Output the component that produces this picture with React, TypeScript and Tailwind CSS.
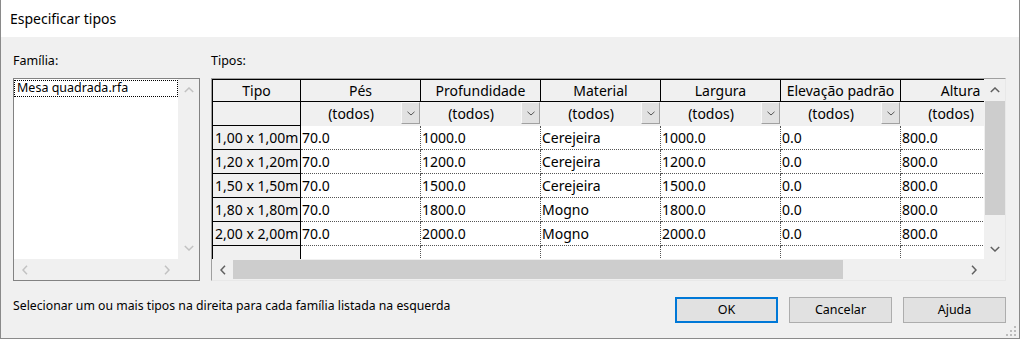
import React from "react";

const cols = ["Pés", "Profundidade", "Material", "Largura", "Elevação padrão", "Altura"];
const rows = [
  ["1,00 x 1,00m", "70.0", "1000.0", "Cerejeira", "1000.0", "0.0", "800.0"],
  ["1,20 x 1,20m", "70.0", "1200.0", "Cerejeira", "1200.0", "0.0", "800.0"],
  ["1,50 x 1,50m", "70.0", "1500.0", "Cerejeira", "1500.0", "0.0", "800.0"],
  ["1,80 x 1,80m", "70.0", "1800.0", "Mogno", "1800.0", "0.0", "800.0"],
  ["2,00 x 2,00m", "70.0", "2000.0", "Mogno", "2000.0", "0.0", "800.0"],
];

function Chevron({ dir, color }: { dir: "up" | "down" | "left" | "right"; color: string }) {
  if (dir === "up" || dir === "down") {
    const d = dir === "up" ? "M0.8 5 L5 1 L9.2 5" : "M0.8 1 L5 5 L9.2 1";
    return (
      <svg width="10" height="6" viewBox="0 0 10 6">
        <path d={d} fill="none" stroke={color} strokeWidth="1.5" />
      </svg>
    );
  }
  const d = dir === "left" ? "M5 0.8 L1 5 L5 9.2" : "M1 0.8 L5 5 L1 9.2";
  return (
    <svg width="6" height="10" viewBox="0 0 6 10">
      <path d={d} fill="none" stroke={color} strokeWidth="1.5" />
    </svg>
  );
}

function DropBtn() {
  return (
    <div className="w-[19px] h-[22px] mr-[1px] shrink-0 bg-[#e1e1e1] border border-t-[#f8f8f8] border-l-[#f8f8f8] border-r-[#a0a0a0] border-b-[#a0a0a0] flex items-center justify-center">
      <svg width="8" height="5" viewBox="0 0 8 5">
        <path d="M0.5 0.8 L4 4 L7.5 0.8" fill="none" stroke="#555" strokeWidth="1" />
      </svg>
    </div>
  );
}

export default function App() {
  return (
    <div className="relative w-[1020px] h-[339px] bg-[#f0f0f0] border-x border-b border-[#8a8a8a] flex flex-col font-['Noto_Sans',sans-serif] text-black overflow-hidden">
      {/* title bar */}
      <div className="h-[37px] shrink-0 bg-white pl-[9px] flex items-center text-[14px]">Especificar tipos</div>

      {/* main */}
      <div className="flex pl-[12px] pt-[15px]">
        {/* left */}
        <div className="w-[187px] flex flex-col">
          <div className="h-[18px] leading-[18px] mb-[8px] text-[12.5px]">Família:</div>
          <div className="h-[203px] border border-[#828282] bg-white flex flex-col">
            <div className="flex h-[180px]">
              <div className="flex-1 bg-white pt-[1px]">
                <div className="h-[17px] border border-dotted border-black flex items-center pl-[2px] text-[12.5px] leading-none">
                  Mesa quadrada.rfa
                </div>
              </div>
              <div className="w-[21px] bg-[#f0f0f0] flex flex-col items-center justify-between py-[8px]">
                <Chevron dir="up" color="#c2c2c2" />
                <Chevron dir="down" color="#c2c2c2" />
              </div>
            </div>
            <div className="flex h-[21px] bg-[#f0f0f0]">
              <div className="flex-1 flex items-center justify-between px-[8px]">
                <Chevron dir="left" color="#c2c2c2" />
                <Chevron dir="right" color="#c2c2c2" />
              </div>
              <div className="w-[21px]" />
            </div>
          </div>
        </div>

        {/* right */}
        <div className="ml-[11px] w-[795px] flex flex-col">
          <div className="h-[18px] leading-[18px] mb-[8px] text-[12.5px]">Tipos:</div>
          <div className="h-[203px] border border-t-[#a0a0a0] border-l-[#a0a0a0] border-r-[#e8e8e8] border-b-[#e8e8e8] bg-[#f0f0f0] flex flex-col">
            <div className="flex h-[180px]">
              {/* grid */}
              <div className="w-[772px] h-[180px] overflow-hidden bg-white">
                <div className="w-max flex flex-col text-[14px]">
                  {/* header */}
                  <div className="flex h-[23px] border-y border-black bg-[#f0f0f0]">
                    <div className="w-[89px] border-x border-black flex items-center justify-center">Tipo</div>
                    {cols.map((c) => (
                      <div key={c} className="w-[120px] border-r border-black flex items-center justify-center whitespace-nowrap">
                        {c}
                      </div>
                    ))}
                  </div>
                  {/* filter */}
                  <div className="flex h-[24px] bg-[#f0f0f0]">
                    <div className="w-[89px] border-x border-b border-black" />
                    {cols.map((c) => (
                      <div key={c} className="w-[120px] flex items-start">
                        <div className="flex-1 h-[23px] flex items-center justify-center">(todos)</div>
                        <DropBtn />
                      </div>
                    ))}
                  </div>
                  {/* data */}
                  {[...rows, ["", "", "", "", "", "", ""]].map((r, i) => (
                    <div key={i} className="flex h-[24px]">
                      <div className="w-[89px] border-x border-b border-black bg-[#f0f0f0] flex items-center pl-[2px] whitespace-nowrap">
                        {r[0]}
                      </div>
                      {r.slice(1).map((v, j) => (
                        <div
                          key={j}
                          className="w-[120px] border-r border-b border-dotted border-[#555] flex items-center pl-[1px] whitespace-nowrap"
                        >
                          {v}
                        </div>
                      ))}
                    </div>
                  ))}
                </div>
              </div>
              {/* vscroll */}
              <div className="w-[21px] bg-[#f0f0f0] flex flex-col">
                <div className="h-[21px] flex items-center justify-center">
                  <Chevron dir="up" color="#606060" />
                </div>
                <div className="h-[114px] ml-[1px] mt-[1px] bg-[#cdcdcd]" />
                <div className="flex-1" />
                <div className="h-[21px] flex items-center justify-center">
                  <Chevron dir="down" color="#606060" />
                </div>
              </div>
            </div>
            {/* hscroll */}
            <div className="flex h-[21px]">
              <div className="w-[772px] flex items-center">
                <div className="w-[21px] h-[21px] flex items-center justify-center">
                  <Chevron dir="left" color="#606060" />
                </div>
                <div className="w-[610px] h-[19px] bg-[#cdcdcd]" />
                <div className="flex-1" />
                <div className="w-[21px] h-[21px] flex items-center justify-center">
                  <Chevron dir="right" color="#606060" />
                </div>
              </div>
              <div className="w-[21px]" />
            </div>
          </div>
        </div>
      </div>

      {/* bottom */}
      <div className="flex justify-between items-start pl-[12px] pr-[13px] mt-[16px]">
        <div className="text-[12.25px] leading-[17px]">
          Selecionar um ou mais tipos na direita para cada família listada na esquerda
        </div>
        <div className="flex gap-[11px] text-[12.5px]">
          <div className="w-[103px] h-[26px] border-2 border-[#0078d7] bg-[#e1e1e1] flex items-center justify-center">OK</div>
          <div className="w-[103px] h-[26px] border border-[#adadad] bg-[#e1e1e1] flex items-center justify-center">Cancelar</div>
          <div className="w-[103px] h-[26px] border border-[#adadad] bg-[#e1e1e1] flex items-center justify-center">Ajuda</div>
        </div>
      </div>

      {/* resize grip */}
      <svg className="absolute right-[2px] bottom-[1px]" width="12" height="12" viewBox="0 0 12 12">
        <rect x="9" y="1" width="2" height="2" fill="#bcbcbc" />
        <rect x="5" y="5" width="2" height="2" fill="#bcbcbc" />
        <rect x="9" y="5" width="2" height="2" fill="#bcbcbc" />
        <rect x="1" y="9" width="2" height="2" fill="#bcbcbc" />
        <rect x="5" y="9" width="2" height="2" fill="#bcbcbc" />
        <rect x="9" y="9" width="2" height="2" fill="#bcbcbc" />
      </svg>
    </div>
  );
}
